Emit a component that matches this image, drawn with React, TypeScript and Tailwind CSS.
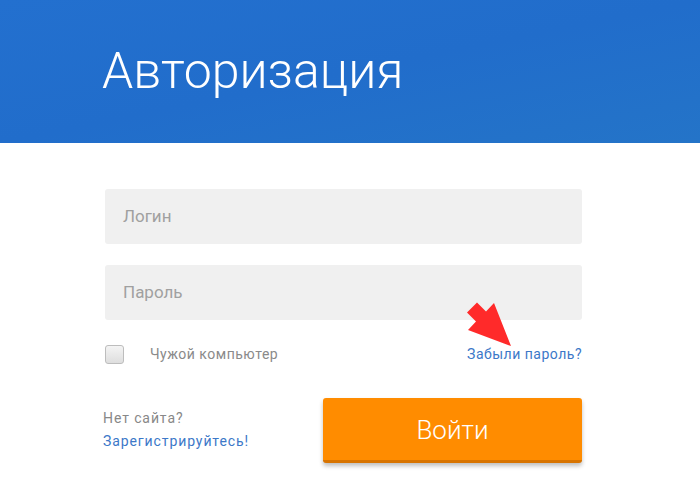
export default function App() {
  return (
    <div className="relative w-[700px] h-[498px] bg-white overflow-hidden" style={{ fontFamily: "Roboto, 'Liberation Sans', sans-serif" }}>
      <header className="h-[143px] bg-gradient-to-br from-[#2370cf] via-[#216dcb] to-[#2474c8] flex items-center pl-[102px]">
        <h1 className="text-[50px] font-light text-white leading-none -mt-[2px]">Авторизация</h1>
      </header>

      <div className="ml-[105px] w-[477px] pt-[46px]">
        <div className="h-[55px] rounded-[3px] bg-[#f0f0f0] flex items-center pl-[18px] text-[17px] text-[#a0a0a0]">Логин</div>
        <div className="mt-[21px] h-[55px] rounded-[3px] bg-[#f0f0f0] flex items-center pl-[18px] text-[17px] text-[#a0a0a0]">Пароль</div>

        <div className="mt-[24px] flex items-center justify-between h-[20px]">
          <div className="flex items-center">
            <span className="w-[19px] h-[19px] rounded-[3px] border border-[#bdbdbd] bg-gradient-to-b from-[#f4f4f4] to-[#dedede]" />
            <span className="ml-[26px] text-[14px] tracking-[0.5px] text-[#8a8a8a]">Чужой компьютер</span>
          </div>
          <a className="text-[14px] tracking-[0.5px] text-[#3c78c8]">Забыли пароль?</a>
        </div>

        <div className="mt-[34px] flex items-start justify-between">
          <div className="pt-[9px] -ml-[2px] text-[14px] leading-[23px] tracking-[0.9px]">
            <div className="text-[#888]">Нет сайта?</div>
            <a className="text-[#3c78c8]">Зарегистрируйтесь!</a>
          </div>
          <button className="w-[259px] h-[65px] pt-[3px] rounded-[3px] bg-[#ff8c00] border-b-[3px] border-[#d87400] text-white text-[26px] font-light shadow-[0_3px_4px_rgba(0,0,0,0.25)]">
            Войти
          </button>
        </div>
      </div>

      <svg className="absolute left-[460px] top-[298px]" width="56" height="52" viewBox="0 0 56 52">
        <path d="M51 48 L34 5 L26 13.5 L17 4.5 L7 14.5 L16 23.5 L8 32 Z" fill="#ff2a2a" />
      </svg>
    </div>
  );
}
